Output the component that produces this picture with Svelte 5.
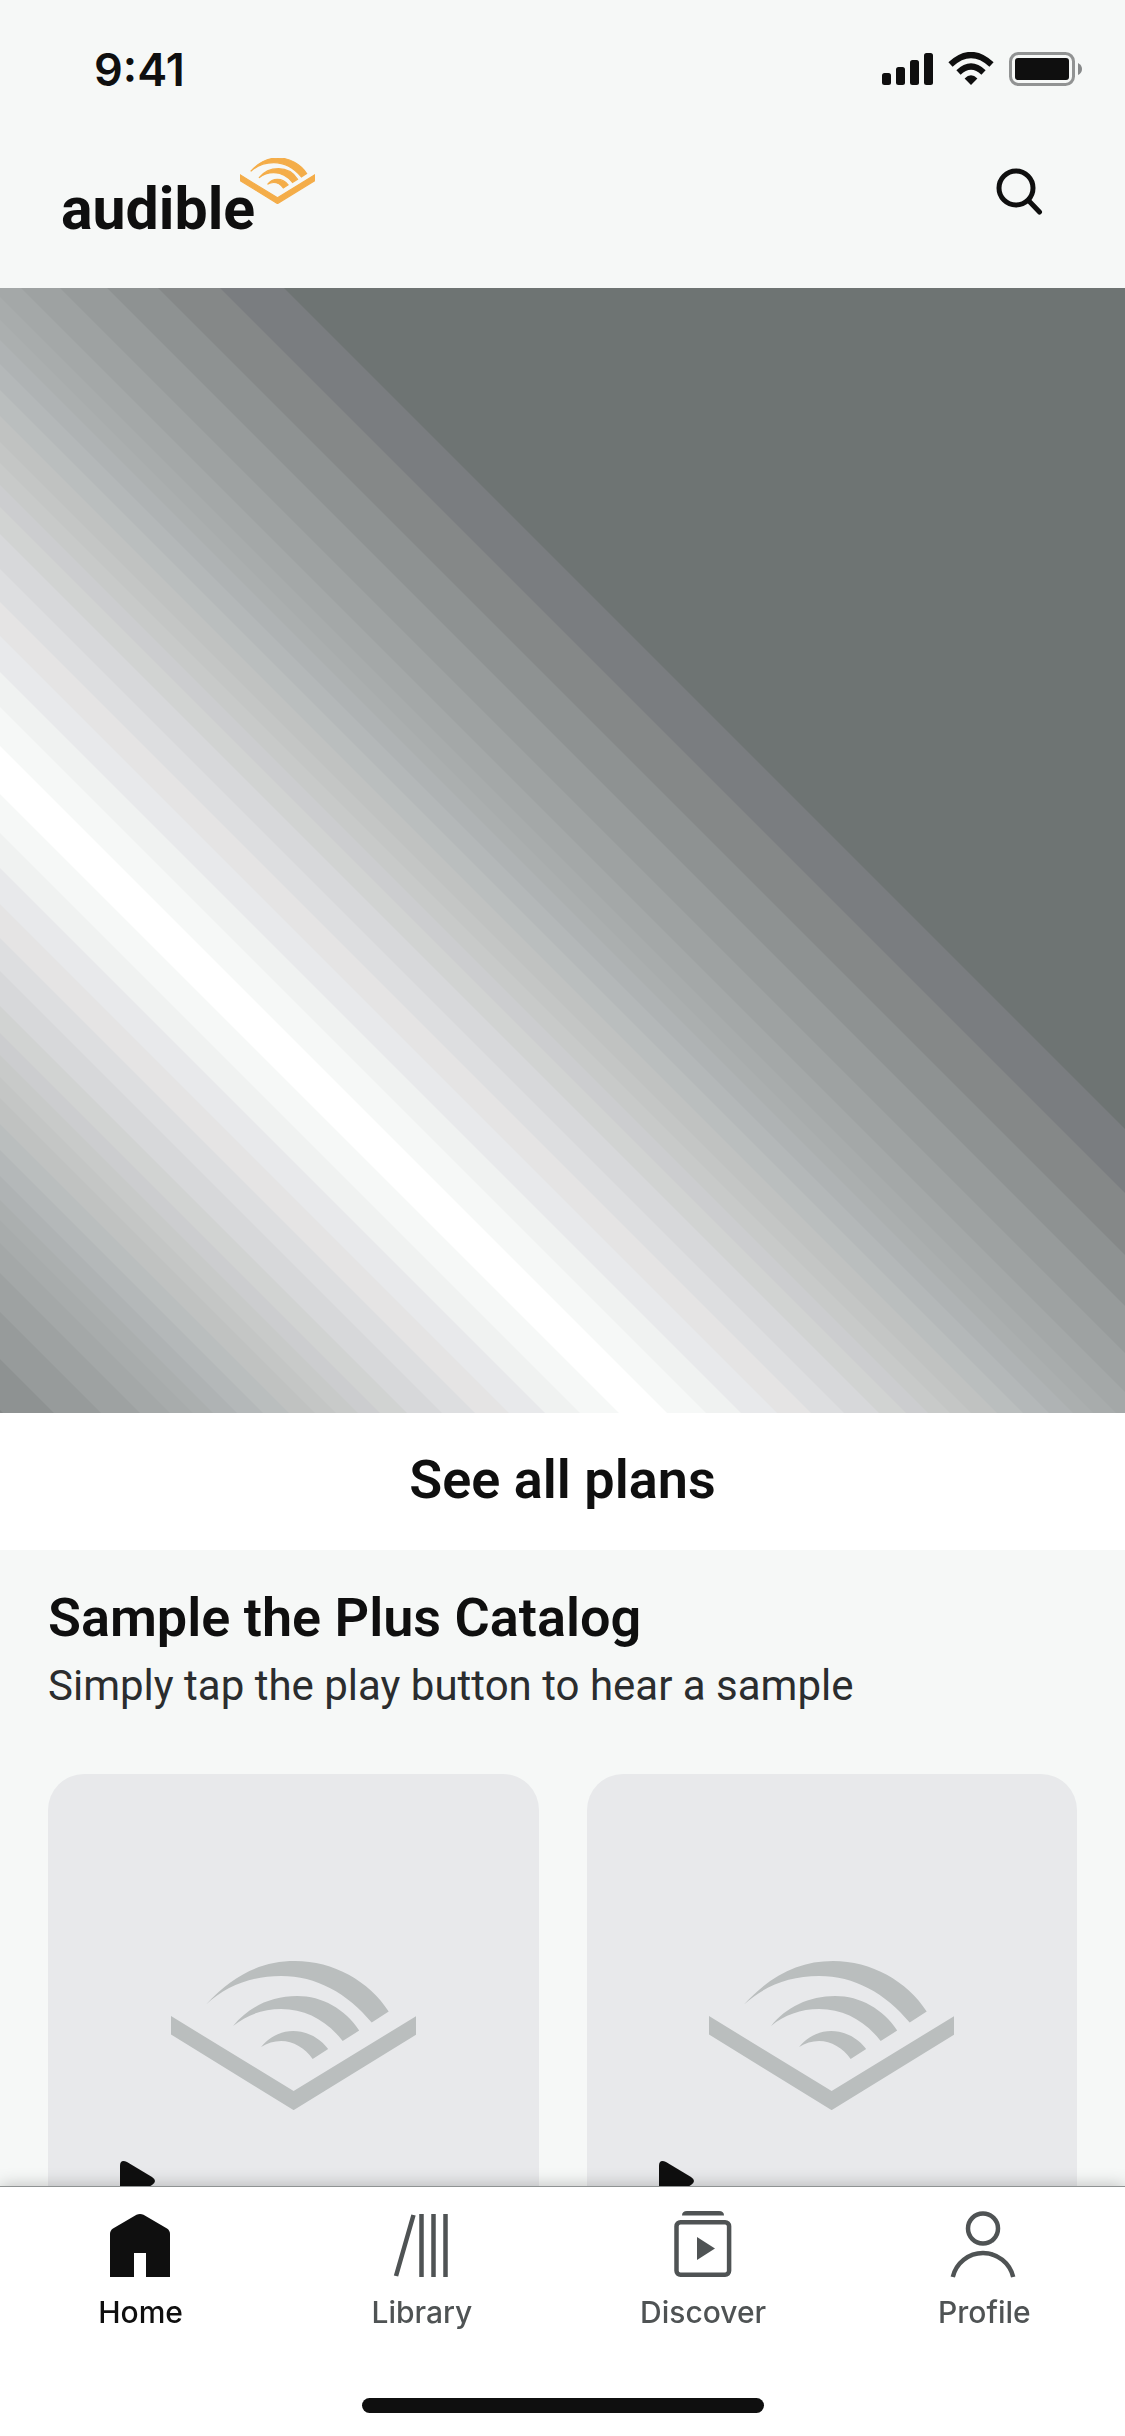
<script>
  let active = $state("Home");
  const tabs = ["Home", "Library", "Discover", "Profile"];
  const samples = [1, 2];

  // stripes of the banner, widest first, so each one is painted over the last
  const bands = [
    { color: "#7a7d80", reach: 766 },
    { color: "#858888", reach: 702 },
    { color: "#8e9292", reach: 640 },
    { color: "#979b9b", reach: 589 },
    { color: "#9ea2a2", reach: 542 },
    { color: "#a4a8a8", reach: 503 },
    { color: "#a8acac", reach: 473 },
    { color: "#abafaf", reach: 450 },
    { color: "#afb3b4", reach: 430 },
    { color: "#b4b8b9", reach: 406 },
    { color: "#babebe", reach: 380 },
    { color: "#c0c2c1", reach: 354 },
    { color: "#c4c6c5", reach: 328 },
    { color: "#c8cac9", reach: 307 },
    { color: "#cccdcf", reach: 285 },
    { color: "#d1d3d2", reach: 263 },
    { color: "#d7d8da", reach: 236 },
    { color: "#dddee0", reach: 201 },
    { color: "#e5e4e4", reach: 168 },
    { color: "#e8e9eb", reach: 134 },
    { color: "#f0f2f1", reach: 98 },
    { color: "#f6f8f7", reach: 63 },
    { color: "#ffffff", reach: 24 },
  ];
</script>

{#snippet mark()}
  <svg class="mark" viewBox="0 0 245 149" fill="currentColor" aria-hidden="true">
    <path d="M0 55 122.5 130 245 55V73.5L122.5 149 0 73.5Z" />
    <path
      d="M35 43.5C62 14 90 0 124 0C162 0 198 20 217.5 50.5L200.5 61.5C176 32 145 15 110 15C80 15 55 25 35 43.5Z"
    />
    <path
      d="M62 65C77 46 100 35 126 35C151 35 174 48 188 69.5L171.5 80C156 60 135 48 110 48C92 48 75 54 62 65Z"
    />
    <path
      d="M90 86C98 76 109 70 122 70C136 70 149 77 157 88L141.5 98C134 87 122 80 110 80C103 80 96 82 90 86Z"
    />
  </svg>
{/snippet}

<div class="screen">
  <div class="status-bar">
    <span class="time">9:41</span>
    <svg class="status-icons" viewBox="0 0 200 34" aria-hidden="true">
      <g fill="#0f0f0f">
        <rect x="0" y="21" width="9" height="12" rx="2.5" />
        <rect x="14" y="15" width="9" height="18" rx="2.5" />
        <rect x="28" y="8" width="9" height="25" rx="2.5" />
        <rect x="42" y="1" width="9" height="32" rx="2.5" />
        <path d="M89 33 82.6 26.4Q89 20 95.4 26.4Z" />
        <rect x="133" y="6" width="54" height="22" rx="3" />
      </g>
      <g fill="none" stroke="#0f0f0f" stroke-width="6.2">
        <path d="M76.5 20.5Q89 8.6 101.5 20.5" />
        <path d="M68.5 12.5Q89 -6.4 109.5 12.5" />
      </g>
      <rect x="128.5" y="1.5" width="63" height="31" rx="8" fill="none" stroke="#919393" stroke-width="3" />
      <path d="M196 11Q200 13 200 17T196 23Z" fill="#87898a" />
    </svg>
  </div>

  <header>
    <a class="logo" href="/">
      audible
      {@render mark()}
    </a>
    <button class="search" aria-label="Search">
      <svg viewBox="0 0 48 48" fill="none" stroke="#0f0f0f" stroke-width="5">
        <circle cx="21" cy="21" r="17" />
        <path d="M33.500 33.500 44.500 45" stroke-linecap="round" />
      </svg>
    </button>
  </header>

  <main>
    <svg class="banner" viewBox="0 0 1125 1125" aria-hidden="true">
      <rect width="1125" height="1125" fill="#6e7473" />
      {#each bands as band}
        <line x1="-1200" y1="-718" x2="2000" y2="2482" stroke={band.color} stroke-width={band.reach * Math.SQRT2} />
      {/each}
    </svg>

    <button class="plans">See all plans</button>

    <section>
      <h2>Sample the Plus Catalog</h2>
      <p>Simply tap the play button to hear a sample</p>
      <div class="samples">
        {#each samples as sample}
          <article class="card">
            {@render mark()}
            <button class="play" aria-label="Play sample {sample}">
              <svg viewBox="0 0 35 40" fill="#0f0f0f">
                <path d="M0 5Q0 -2 7 1L32 16Q38 20 32 24L7 39Q0 42 0 35Z" />
              </svg>
            </button>
          </article>
        {/each}
      </div>
    </section>
  </main>

  <nav>
    <div class="tabs">
      {#each tabs as tab}
        <button class="tab" class:active={active === tab} onclick={() => (active = tab)}>
          <svg viewBox="0 0 72 72" fill="none" stroke="currentColor" stroke-width="4.5" aria-hidden="true">
            {#if tab === "Home"}
              <path
                d="M5 69V26Q5 22.500 8 20.500L31.500 6.800Q35 5 38.500 6.800L62 20.500Q65 22.500 65 26V69H41V45H29V69Z"
                fill="currentColor"
                stroke="none"
              />
            {:else if tab === "Library"}
              <path d="M27.500 7 10 68M35.500 6V69M47.500 6V69M59.500 6V69" />
            {:else if tab === "Discover"}
              <path d="M15 7.500Q15 3 20 3H52Q57 3 57 7.500Z" fill="currentColor" stroke="none" />
              <rect x="9.500" y="14.200" width="52.600" height="52.600" rx="4" />
              <path d="M30 29 48 40.500 30 52Z" fill="currentColor" stroke="none" />
            {:else}
              <circle cx="35" cy="20.500" r="15" />
              <path d="M4.800 69A31 31 0 0 1 65.200 69" />
            {/if}
          </svg>
          {tab}
        </button>
      {/each}
    </div>
    <div class="home-indicator"></div>
  </nav>
</div>

<style>
  :global(body) {
    background: #f6f8f7;
  }

  .screen {
    color: #0f0f0f;
    font-family: Roboto, "Liberation Sans", sans-serif;
  }

  button {
    border: none;
    padding: 0;
    background: none;
    color: inherit;
    font: inherit;
    cursor: pointer;
  }

  svg {
    display: block;
  }

  .status-bar {
    display: flex;
    justify-content: space-between;
    align-items: center;
    height: 138px;
    padding: 0 43px 0 94px;
    box-sizing: border-box;
  }

  .time {
    font-family: Inter, sans-serif;
    font-size: 45px;
    font-weight: 600;
  }

  .status-icons {
    width: 200px;
    height: 34px;
  }

  header {
    display: flex;
    justify-content: space-between;
    align-items: flex-start;
    height: 150px;
    padding: 20px 82px 0 61px;
    box-sizing: border-box;
  }

  .logo {
    position: relative;
    padding-top: 15px;
    color: inherit;
    font-size: 59px;
    font-weight: 700;
    line-height: 72px;
    text-decoration: none;
  }

  .logo .mark {
    position: absolute;
    left: 179px;
    top: 0;
    width: 75px;
    color: #f4ad49;
    stroke: currentColor;
    stroke-width: 4px;
  }

  .search {
    margin-top: 9px;
  }

  .search svg {
    width: 48px;
    height: 48px;
  }

  .banner {
    width: 100%;
  }

  .plans {
    width: 100%;
    height: 137px;
    padding-bottom: 4px;
    background: #fff;
    font-size: 54px;
    font-weight: 600;
  }

  section {
    padding: 34px 48px 0;
  }

  h2 {
    margin: 0;
    font-size: 54px;
    font-weight: 600;
    line-height: 68px;
  }

  p {
    margin: 0 0 54px;
    color: #2b2d2e;
    font-size: 42px;
    line-height: 68px;
  }

  .samples {
    display: grid;
    grid-template-columns: 1fr 1fr;
    gap: 48px;
  }

  .card {
    position: relative;
    display: flex;
    justify-content: center;
    align-items: center;
    aspect-ratio: 1;
    padding-top: 32px;
    border-radius: 36px;
    box-sizing: border-box;
    background: #e8e9eb;
  }

  .card .mark {
    width: 50%;
    color: #babebe;
  }

  .play {
    position: absolute;
    left: 72px;
    bottom: 64px;
  }

  .play svg {
    width: 35px;
    height: 40px;
  }

  nav {
    position: fixed;
    left: 0;
    right: 0;
    bottom: 0;
    padding: 21px 0 23px;
    border-top: 1px solid #8f9393;
    background: #fff;
    box-shadow: 0 0 16px rgba(0, 0, 0, 0.25);
  }

  .tabs {
    display: grid;
    grid-template-columns: repeat(4, 1fr);
    margin-bottom: 66px;
  }

  .tab {
    display: flex;
    flex-direction: column;
    align-items: center;
    gap: 12px;
    color: #4f5354;
    font-family: Inter, sans-serif;
    font-size: 30px;
    font-weight: 500;
    line-height: 40px;
  }

  .tab.active {
    color: #0f0f0f;
  }

  .tab svg {
    width: 72px;
    height: 72px;
  }

  .home-indicator {
    width: 402px;
    height: 15px;
    margin: 0 auto;
    border-radius: 8px;
    background: #0f0f0f;
  }
</style>
